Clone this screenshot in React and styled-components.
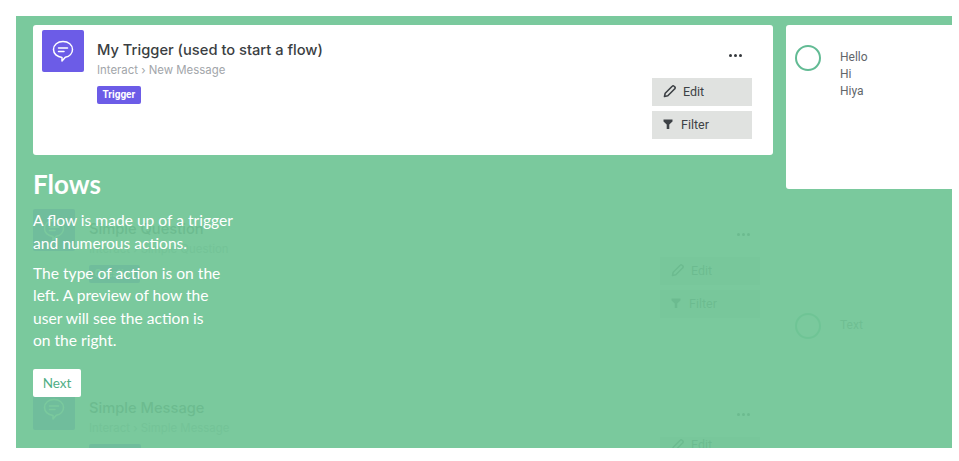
import React from "react";
import styled, { createGlobalStyle } from "styled-components";

const GlobalStyle = createGlobalStyle`
  html, body {
    margin: 0;
    padding: 0;
    background: #fff;
    overflow: hidden;
  }
`;

const Stage = styled.div`
  position: relative;
  width: 936px;
  height: 432px;
  margin: 16px 0 0 16px;
  overflow: hidden;
  background: #f4f5f5;
  font-family: "Roboto", "Liberation Sans", sans-serif;
`;

const FlowList = styled.div`
  display: flex;
  flex-direction: column;
  padding: 193px 0 0 17px;
`;

const FlowRow = styled.div`
  display: flex;
  height: ${(p) => p.$height}px;
`;

const FlowCard = styled.div`
  display: flex;
  width: 727px;
  flex: none;
  gap: 14px;
`;

const IconTile = styled.div`
  display: flex;
  align-items: center;
  justify-content: center;
  flex: none;
  width: 42px;
  height: 42px;
  border-radius: 2px;
  background: #6c5ce7;
  color: #fff;
`;

const CardBody = styled.div`
  flex: 1;
  padding-top: 10px;
`;

const CardTitle = styled.div`
  font-family: "Inter", "Liberation Sans", sans-serif;
  font-size: 14.7px;
  font-weight: 500;
  line-height: 20px;
  color: #3a3e42;
  white-space: nowrap;
`;

const CardPath = styled.div`
  margin-top: 3px;
  font-family: "Inter", "Liberation Sans", sans-serif;
  font-size: 11.4px;
  line-height: 15px;
  color: #a2a6aa;
  white-space: nowrap;
`;

const Tag = styled.span`
  display: inline-block;
  margin-top: 8px;
  padding: 0 5.500px;
  height: 18px;
  border-radius: 2px;
  background: #6c5ce7;
  color: #fff;
  font-size: 10px;
  font-weight: 700;
  line-height: 18px;
`;

const CardActions = styled.div`
  display: flex;
  flex-direction: column;
  align-items: flex-end;
  flex: none;
  width: 100px;
`;

const MoreDots = styled.div`
  display: flex;
  gap: 2px;
  width: 13px;
  margin: ${(p) => p.$top}px 10px 21px 0;
  color: #34383c;

  & > i {
    width: 3px;
    height: 3px;
    border-radius: 50%;
    background: currentColor;
  }
`;

const ActionButton = styled.div`
  display: flex;
  align-items: center;
  gap: ${(p) => p.$gap}px;
  width: 100px;
  height: 28px;
  margin-bottom: 5px;
  padding: 0 0 2px 11px;
  box-sizing: border-box;
  background: #e0e2e0;
  color: #3d4145;
  font-size: 12.5px;
`;

const PreviewCell = styled.div`
  display: flex;
  gap: 19px;
  align-items: flex-start;
  margin-left: 35px;
  padding-top: 104px;
`;

const Avatar = styled.div`
  flex: none;
  width: 22px;
  height: 22px;
  border: 2px solid #62bb94;
  border-radius: 50%;
`;

const PreviewText = styled.div`
  margin-top: 4px;
  font-size: 12px;
  line-height: 17px;
  color: #62666a;
`;

const Scrim = styled.div`
  position: absolute;
  inset: 0;
  background: #70c596;
  opacity: 0.93;
`;

const Spotlight = styled.div`
  position: absolute;
  top: 9px;
  left: 17px;
  display: flex;
  gap: 13px;
  align-items: flex-start;
`;

const TriggerCard = styled.div`
  display: flex;
  gap: 13px;
  box-sizing: border-box;
  width: 740px;
  height: 130px;
  padding: 5px 21px 0 9px;
  border-radius: 3px;
  background: #fff;
`;

const PreviewCard = styled.div`
  display: flex;
  gap: 19px;
  box-sizing: border-box;
  width: 170px;
  height: 164px;
  padding: 20px 0 0 9px;
  border-radius: 3px;
  background: #fff;
`;

const TourPopover = styled.div`
  position: absolute;
  top: 153px;
  left: 17px;
  width: 215px;
  color: #fff;
  font-family: "Lato", "Liberation Sans", sans-serif;
`;

const TourTitle = styled.h2`
  margin: 0 0 10px;
  font-size: 26px;
  font-weight: 700;
  line-height: 30px;
`;

const TourText = styled.p`
  margin: 0 0 7.500px;
  font-size: 15.6px;
  line-height: 22.5px;
  white-space: pre-line;
`;

const NextButton = styled.button`
  display: block;
  width: 48px;
  height: 28px;
  margin-top: 17px;
  padding: 0;
  border: 0;
  border-radius: 2px;
  background: #fff;
  color: #4fae85;
  font-family: inherit;
  font-size: 13.5px;
  font-weight: 400;
`;

const ChatIcon = () => (
  <svg width="24" height="24" viewBox="0 0 24 24" fill="none" stroke="currentColor" strokeWidth="1.5" strokeLinecap="round" strokeLinejoin="round">
    <path d="M12 2.500c5.400 0 9.500 3.400 9.500 8 0 3.900-3 7-7.200 7.800L11 22v-3.600c-4.900-.5-8.500-3.700-8.500-7.900 0-4.600 4.100-8 9.500-8z" />
    <path d="M7.500 9h9M7.500 12.500h5.500" />
  </svg>
);

const PencilIcon = () => (
  <svg width="14" height="14" viewBox="0 0 14 14" fill="none" stroke="currentColor" strokeWidth="1.6" strokeLinejoin="round">
    <path d="M1.500 12.500l.7-3.300 7-7a1.300 1.300 0 0 1 1.900 0l.7.700a1.300 1.300 0 0 1 0 1.900l-7 7z" />
  </svg>
);

const FunnelIcon = () => (
  <svg width="10" height="10" viewBox="0 0 10 10" fill="currentColor">
    <path d="M0.500 0.500h9v2L6.300 5.500V10H3.700V5.500L0.500 2.500z" />
  </svg>
);

const Actions = ({ top }) => (
  <CardActions>
    <MoreDots $top={top}>
      <i />
      <i />
      <i />
    </MoreDots>
    <ActionButton $gap={6}>
      <PencilIcon /> Edit
    </ActionButton>
    <ActionButton $gap={8}>
      <FunnelIcon /> Filter
    </ActionButton>
  </CardActions>
);

export default function App() {
  return (
    <>
      <GlobalStyle />
      <Stage>
        <FlowList>
          <FlowRow $height={179}>
            <FlowCard>
              <IconTile>
                <ChatIcon />
              </IconTile>
              <CardBody>
                <CardTitle>Simple Question</CardTitle>
                <CardPath>Interact › Simple Question</CardPath>
                <Tag>Question</Tag>
              </CardBody>
              <Actions top={24} />
            </FlowCard>
            <PreviewCell>
              <Avatar />
              <PreviewText>Text</PreviewText>
            </PreviewCell>
          </FlowRow>
          <FlowRow $height={60}>
            <FlowCard>
              <IconTile>
                <ChatIcon />
              </IconTile>
              <CardBody>
                <CardTitle>Simple Message</CardTitle>
                <CardPath>Interact › Simple Message</CardPath>
                <Tag>Message</Tag>
              </CardBody>
              <Actions top={25} />
            </FlowCard>
          </FlowRow>
        </FlowList>
        <Scrim />
        <Spotlight>
          <TriggerCard>
            <IconTile>
              <ChatIcon />
            </IconTile>
            <CardBody>
              <CardTitle>My Trigger (used to start a flow)</CardTitle>
              <CardPath>Interact › New Message</CardPath>
              <Tag>Trigger</Tag>
            </CardBody>
            <Actions top={24} />
          </TriggerCard>
          <PreviewCard>
            <Avatar />
            <PreviewText>
              Hello
              <br />
              Hi
              <br />
              Hiya
            </PreviewText>
          </PreviewCard>
        </Spotlight>
        <TourPopover>
          <TourTitle>Flows</TourTitle>
          <TourText>{"A flow is made up of a trigger\nand numerous actions."}</TourText>
          <TourText>{"The type of action is on the\nleft. A preview of how the\nuser will see the action is\non the right."}</TourText>
          <NextButton>Next</NextButton>
        </TourPopover>
      </Stage>
    </>
  );
}
